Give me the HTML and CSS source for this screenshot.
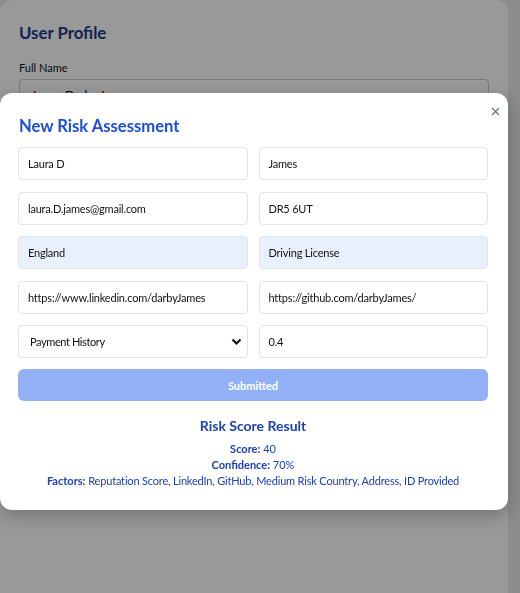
FILE: index.html
```html
<!DOCTYPE html>
<html>
<head>
<meta charset="utf-8">
<link rel="stylesheet" href="styles.css">
</head>
<body>
<div class="page">
  <div class="profile">
    <h2 class="profile-title">User Profile</h2>
    <label class="profile-label">Full Name</label>
    <div class="profile-input">Laura Darby James</div>
  </div>
</div>
<div class="overlay">
  <div class="modal">
    <button class="close" aria-label="Close">
      <svg width="9" height="9" viewBox="0 0 9 9"><path d="M1 1L8 8M8 1L1 8" stroke="#6b7280" stroke-width="1.3" fill="none"/></svg>
    </button>
    <h2 class="modal-title">New Risk Assessment</h2>
    <div class="grid">
      <div class="field">Laura D</div>
      <div class="field">James</div>
      <div class="field">laura.D.james@gmail.com</div>
      <div class="field">DR5 6UT</div>
      <div class="field filled">England</div>
      <div class="field filled">Driving License</div>
      <div class="field">https://www.linkedin.com/darbyJames</div>
      <div class="field">https://github.com/darbyJames/</div>
      <div class="field select"><span>Payment History</span>
        <svg width="11" height="8" viewBox="0 0 11 8"><path d="M1.5 1.5L5.5 5.5L9.5 1.5" stroke="#111" stroke-width="2.2" fill="none"/></svg>
      </div>
      <div class="field">0.4</div>
    </div>
    <button class="submit">Submitted</button>
    <div class="result">
      <h3 class="result-title">Risk Score Result</h3>
      <p class="line"><b>Score:</b> 40</p>
      <p class="line"><b>Confidence:</b> 70%</p>
      <p class="line factors"><b>Factors:</b> <span class="tight">Reputation Score, LinkedIn, GitHub, Medium Risk Country, Address, ID Provided</span></p>
    </div>
  </div>
</div>
</body>
</html>
```
FILE: styles.css
```css
* { box-sizing: border-box; }
html, body { margin: 0; padding: 0; }
body {
  background: #e8e9ed;
  font-family: Lato, "Noto Sans", sans-serif;
  width: 520px;
  height: 593px;
  overflow: hidden;
}
.page { width: 508px; }
.profile {
  background: #fff;
  border-radius: 12px;
  padding: 23px 19px 40px;
  height: 620px;
}
.profile-title {
  margin: 0 0 18px;
  font-size: 16.8px;
  line-height: 20px;
  font-weight: 700;
  color: #1e3a8a;
}
.profile-label {
  display: block;
  font-size: 11px;
  line-height: 14px;
  color: #111;
  margin-bottom: 4px;
}
.profile-input {
  border: 1px solid #c8c8c8;
  border-radius: 4px;
  height: 34px;
  padding: 8px 13px;
  font-size: 12px;
  line-height: 14px;
}
.overlay {
  position: fixed;
  inset: 0;
  background: rgba(0,0,0,0.4);
}
.modal {
  position: absolute;
  left: 0;
  top: 93px;
  width: 508px;
  background: #fff;
  border-radius: 12px;
  padding: 16px 20px 21px 18px;
  box-shadow: 0 6px 20px rgba(0,0,0,0.25);
}
.close {
  position: absolute;
  top: 12px;
  right: 6px;
  border: 0;
  background: none;
  padding: 2px;
  display: flex;
}
.modal-title {
  margin: 7px 0 11px 1px;
  font-size: 16.6px;
  font-weight: 700;
  color: #1d4ed8;
  line-height: 20px;
}
.grid {
  display: grid;
  grid-template-columns: minmax(0,1fr) minmax(0,1fr);
  column-gap: 11px;
  row-gap: 11.6px;
}
.field {
  height: 33px;
  border: 1px solid #e3e3e3;
  border-radius: 4px;
  padding: 0 9px;
  display: flex;
  align-items: center;
  font-size: 11px;
  letter-spacing: -0.2px;
  color: #111;
  white-space: nowrap;
  overflow: hidden;
}
.field.filled { background: #e8f0fe; }
.field.select { justify-content: space-between; padding: 0 5px 0 11px; letter-spacing: -0.4px; }
.submit {
  display: block;
  width: 100%;
  margin-top: 11px;
  height: 32px;
  border: 0;
  border-radius: 6px;
  background: #2563eb;
  opacity: 0.5;
  color: #fff;
  font-family: inherit;
  font-size: 11px;
  font-weight: 700;
}
.result {
  text-align: center;
  color: #1e40af;
  margin-top: 16px;
}
.result-title {
  margin: 0 0 6px;
  font-size: 14px;
  font-weight: 700;
  line-height: 18px;
}
.line {
  margin: 0;
  font-size: 11px;
  line-height: 16px;
}
.tight { letter-spacing: -0.18px; }
```
